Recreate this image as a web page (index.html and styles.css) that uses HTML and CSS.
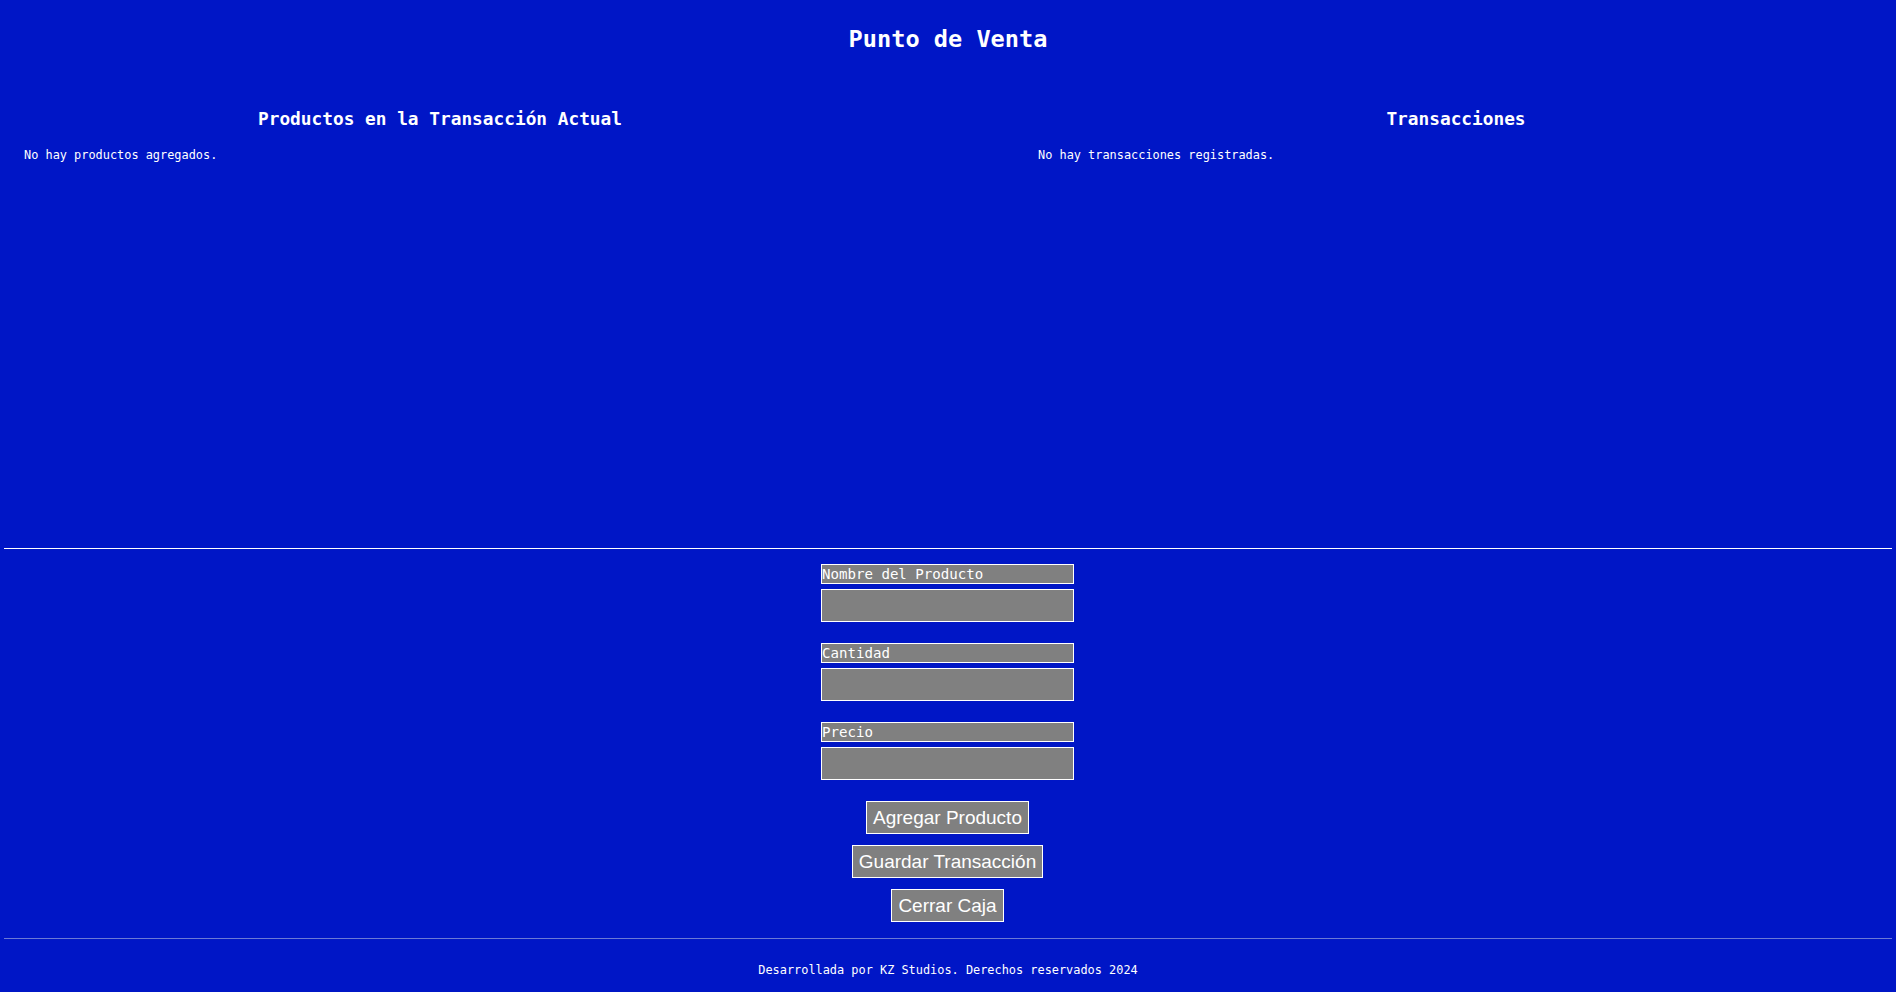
FILE: index.html
```html
<!DOCTYPE html>
<html lang="es">
<head>
<meta charset="utf-8">
<title>Punto de Venta</title>
<link rel="stylesheet" href="styles.css">
</head>
<body>
<header class="top">
  <h1 class="title">Punto de Venta</h1>
</header>
<main class="panels">
  <section class="panel">
    <h2 class="panel-title">Productos en la Transacción Actual</h2>
    <p class="empty">No hay productos agregados.</p>
  </section>
  <section class="panel">
    <h2 class="panel-title">Transacciones</h2>
    <p class="empty">No hay transacciones registradas.</p>
  </section>
</main>
<section class="entry">
  <form class="form">
    <div class="field">
      <label class="field-label" for="nombre">Nombre del Producto</label>
      <input class="field-input" id="nombre" type="text">
    </div>
    <div class="field">
      <label class="field-label" for="cantidad">Cantidad</label>
      <input class="field-input" id="cantidad" type="text">
    </div>
    <div class="field">
      <label class="field-label" for="precio">Precio</label>
      <input class="field-input" id="precio" type="text">
    </div>
    <div class="actions">
      <button class="btn" type="button">Agregar Producto</button>
      <button class="btn" type="button">Guardar Transacción</button>
      <button class="btn" type="button">Cerrar Caja</button>
    </div>
  </form>
</section>
<footer class="footer">
  <p class="footer-text">Desarrollada por KZ Studios. Derechos reservados 2024</p>
</footer>
</body>
</html>
```
FILE: styles.css
```css
html, body {
  margin: 0;
  padding: 0;
}
body {
  background: #0016c6;
  color: #ffffff;
  font-family: "DejaVu Sans Mono", "Liberation Mono", monospace;
  font-size: 11.9px;
  height: 992px;
  overflow: hidden;
}
.top {
  padding-top: 25px;
}
.title {
  margin: 0;
  font-size: 23.6px;
  line-height: 28px;
  font-weight: bold;
  text-align: center;
}
.panels {
  margin: 55px 4px 0;
  height: 440px;
  border-bottom: 1px solid #ffffff;
  display: flex;
  justify-content: space-between;
}
.panel {
  width: 872px;
  box-sizing: border-box;
  padding: 0 20px;
}
.panel:last-child {
  padding: 0 18px;
}
.panel-title {
  margin: 0;
  font-size: 17.8px;
  line-height: 21px;
  font-weight: bold;
  text-align: center;
}
.empty {
  margin: 19px 0 0;
  line-height: 14px;
}
.entry {
  display: flex;
  justify-content: center;
  padding: 15px 1px 0 0;
}
.form {
  width: 253px;
  display: flex;
  flex-direction: column;
}
.field {
  display: flex;
  flex-direction: column;
  gap: 5px;
  margin-bottom: 21px;
}
.field-label {
  display: block;
  background: #808080;
  border: 1px solid #ffffff;
  font-size: 14.1px;
  line-height: 18px;
  color: #ffffff;
}
.field-input {
  box-sizing: border-box;
  width: 253px;
  height: 33px;
  margin: 0;
  background: #808080;
  border: 1px solid #ffffff;
  color: #ffffff;
  padding: 0 4px;
  font-family: inherit;
}
.actions {
  display: flex;
  flex-direction: column;
  align-items: center;
  gap: 11px;
}
.btn {
  margin: 0;
  font-family: "Liberation Sans", Arial, sans-serif;
  font-size: 19px;
  line-height: 23px;
  padding: 4px 6px;
  background: #808080;
  color: #ffffff;
  border: 1px solid #ffffff;
}
.footer {
  margin: 16px 4px 0;
  border-top: 1px solid #6b79d6;
  padding-top: 24px;
}
.footer-text {
  margin: 0;
  text-align: center;
  line-height: 14px;
}
```
